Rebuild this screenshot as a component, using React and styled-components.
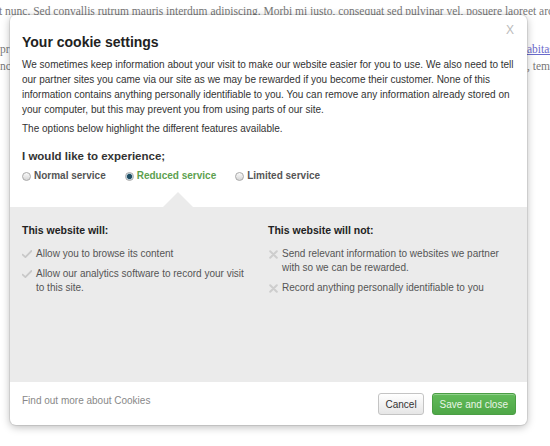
import React from "react";
import styled, { createGlobalStyle } from "styled-components";

const Global = createGlobalStyle`
  html, body { margin: 0; padding: 0; background: #fff; }
  body { font-family: "Liberation Sans", Arial, sans-serif; }
`;

const Page = styled.div`
  position: relative;
  width: 550px;
  height: 446px;
  overflow: hidden;
  background: #fff;
`;

const Background = styled.div`
  padding-top: 3px;
  font-family: "Liberation Serif", "Times New Roman", serif;
  font-size: 11.5px;
  line-height: 17px;
  color: #777;
`;

const BgPara = styled.div`
  margin-bottom: ${(p) => p.$gap || 0}px;
`;

const BgLine = styled.div`
  display: flex;
  justify-content: space-between;
  white-space: nowrap;
  overflow: hidden;
`;

const BgLeft = styled.span`
  display: block;
  white-space: nowrap;
  margin-left: ${(p) => p.$shift || 0}px;
`;

const BgRight = styled.span`
  display: block;
  width: 23px;
  overflow: hidden;
  white-space: nowrap;
`;

const BgLink = styled.span`
  color: #6a6acb;
  text-decoration: underline;
`;

const Modal = styled.div`
  position: absolute;
  left: 10px;
  top: 15px;
  width: 517px;
  height: 410px;
  background: #fff;
  border-radius: 6px;
  box-shadow: 0 0 0 1px rgba(0, 0, 0, 0.08), 0 2px 8px rgba(0, 0, 0, 0.28);
  display: flex;
  flex-direction: column;
  overflow: visible;
`;

const Close = styled.div`
  position: absolute;
  right: 13px;
  top: 8px;
  font-size: 12px;
  color: #bbb;
  font-family: "Liberation Sans", Arial, sans-serif;
`;

const Header = styled.div`
  padding: 17px 12px 0 12px;
  height: 192px;
  box-sizing: border-box;
  flex: none;
`;

const Title = styled.h2`
  margin: 0 0 5px 0;
  font-size: 14px;
  line-height: 20px;
  font-weight: bold;
  color: #222;
`;

const Text = styled.p`
  margin: 0 0 ${(p) => p.$mb || 0}px 0;
  font-size: 10px;
  line-height: 15px;
  color: #333;
  white-space: nowrap;
`;

const Experience = styled.h3`
  margin: 12px 0 5px 0;
  font-size: 11.5px;
  line-height: 16px;
  font-weight: bold;
  color: #333;
`;

const RadioRow = styled.div`
  display: flex;
  align-items: center;
  gap: 19px;
`;

const RadioLabel = styled.label`
  display: flex;
  align-items: center;
  gap: 3px;
  font-size: 10px;
  line-height: 14px;
  font-weight: bold;
  color: ${(p) => (p.$active ? "#5d9f4f" : "#555")};
`;

const RadioDot = styled.span`
  width: 7px;
  height: 7px;
  border-radius: 50%;
  border: 1px solid #a9a9a9;
  background: ${(p) =>
    p.$checked
      ? "radial-gradient(circle at 50% 50%, #1f4d63 0 2.2px, #8fb2c4 2.6px, #dde8ee 3.5px)"
      : "linear-gradient(#fafafa, #d6d6d6)"};
`;

const Panel = styled.div`
  position: relative;
  flex: none;
  background: #ebebeb;
  height: 175px;
  box-sizing: border-box;
  padding: 16px 12px 0 12px;
  display: grid;
  grid-template-columns: 246px 1fr;
  align-items: start;
`;

const Pointer = styled.div`
  position: absolute;
  left: 153px;
  top: -15px;
  width: 0;
  height: 0;
  border-left: 15px solid transparent;
  border-right: 15px solid transparent;
  border-bottom: 15px solid #ebebeb;
`;

const Column = styled.div`
  display: flex;
  flex-direction: column;
`;

const ColTitle = styled.h4`
  margin: 0 0 10px 0;
  font-size: 10.5px;
  line-height: 14px;
  font-weight: bold;
  color: #222;
`;

const List = styled.ul`
  list-style: none;
  margin: 0;
  padding: 0;
  display: flex;
  flex-direction: column;
  gap: 6px;
`;

const Item = styled.li`
  display: flex;
  align-items: flex-start;
  gap: 4px;
  font-size: 10px;
  line-height: 14px;
  color: #555;
  white-space: nowrap;
`;

const IconBox = styled.span`
  flex: none;
  width: 10px;
  height: 14px;
  display: flex;
  align-items: center;
  justify-content: center;
`;

const Footer = styled.div`
  flex: 1;
  display: flex;
  align-items: center;
  justify-content: space-between;
  padding: 0 11px 0 12px;
`;

const MoreLink = styled.span`
  font-size: 10px;
  color: #888;
  margin-top: -6px;
`;

const Buttons = styled.div`
  display: flex;
  gap: 8px;
  margin-top: 1px;
`;

const Button = styled.button`
  height: 22px;
  box-sizing: border-box;
  padding: 0 ${(p) => (p.$primary ? 7 : 6)}px;
  border-radius: 3px;
  font-family: "Liberation Sans", Arial, sans-serif;
  font-size: 10px;
  cursor: pointer;
  border: 1px solid ${(p) => (p.$primary ? "#4b9e45" : "#c4c4c4")};
  color: ${(p) => (p.$primary ? "#e9f5e6" : "#333")};
  background: ${(p) =>
    p.$primary
      ? "linear-gradient(#62bb5a, #4ea747)"
      : "linear-gradient(#ffffff, #e6e6e6)"};
  box-shadow: inset 0 1px 0 rgba(255, 255, 255, 0.3);
`;

const Check = () => (
  <svg width="10" height="8" viewBox="0 0 10 8">
    <path d="M0.5 4.6 L3.4 7.2 L9.5 1" fill="none" stroke="#c8c8c8" strokeWidth="1.8" strokeLinecap="round" strokeLinejoin="round" />
  </svg>
);

const Cross = () => (
  <svg width="9" height="9" viewBox="0 0 9 9">
    <path d="M1.2 1.2 L7.8 7.8 M7.8 1.2 L1.2 7.8" fill="none" stroke="#cdcdcd" strokeWidth="2" strokeLinecap="round" />
  </svg>
);

export default function App() {
  return (
    <Page>
      <Global />
      <Background>
        <BgPara $gap={21}>
          <BgLine>
            <BgLeft $shift={-1}>
              t nunc. Sed convallis rutrum mauris interdum adipiscing. Morbi mi justo, consequat sed pulvinar vel, posuere laoreet arcu.
            </BgLeft>
          </BgLine>
        </BgPara>
        <BgPara>
          <BgLine>
            <BgLeft>pr</BgLeft>
            <BgRight>
              <BgLink>abitasse</BgLink>
            </BgRight>
          </BgLine>
          <BgLine>
            <BgLeft>nc</BgLeft>
            <BgRight>, tempus</BgRight>
          </BgLine>
        </BgPara>
      </Background>

      <Modal>
        <Close>X</Close>
        <Header>
          <Title>Your cookie settings</Title>
          <Text $mb={4}>
            We sometimes keep information about your visit to make our website easier for you to use. We also need to tell
            <br />
            our partner sites you came via our site as we may be rewarded if you become their customer. None of this
            <br />
            information contains anything personally identifiable to you. You can remove any information already stored on
            <br />
            your computer, but this may prevent you from using parts of our site.
          </Text>
          <Text>The options below highlight the different features available.</Text>
          <Experience>I would like to experience;</Experience>
          <RadioRow>
            <RadioLabel>
              <RadioDot />
              Normal service
            </RadioLabel>
            <RadioLabel $active>
              <RadioDot $checked />
              Reduced service
            </RadioLabel>
            <RadioLabel>
              <RadioDot />
              Limited service
            </RadioLabel>
          </RadioRow>
        </Header>

        <Panel>
          <Pointer />
          <Column>
            <ColTitle>This website will:</ColTitle>
            <List>
              <Item>
                <IconBox><Check /></IconBox>
                <span>Allow you to browse its content</span>
              </Item>
              <Item>
                <IconBox><Check /></IconBox>
                <span>
                  Allow our analytics software to record your visit
                  <br />
                  to this site.
                </span>
              </Item>
            </List>
          </Column>
          <Column>
            <ColTitle>This website will not:</ColTitle>
            <List>
              <Item>
                <IconBox><Cross /></IconBox>
                <span>
                  Send relevant information to websites we partner
                  <br />
                  with so we can be rewarded.
                </span>
              </Item>
              <Item>
                <IconBox><Cross /></IconBox>
                <span>Record anything personally identifiable to you</span>
              </Item>
            </List>
          </Column>
        </Panel>

        <Footer>
          <MoreLink>Find out more about Cookies</MoreLink>
          <Buttons>
            <Button>Cancel</Button>
            <Button $primary>Save and close</Button>
          </Buttons>
        </Footer>
      </Modal>
    </Page>
  );
}
